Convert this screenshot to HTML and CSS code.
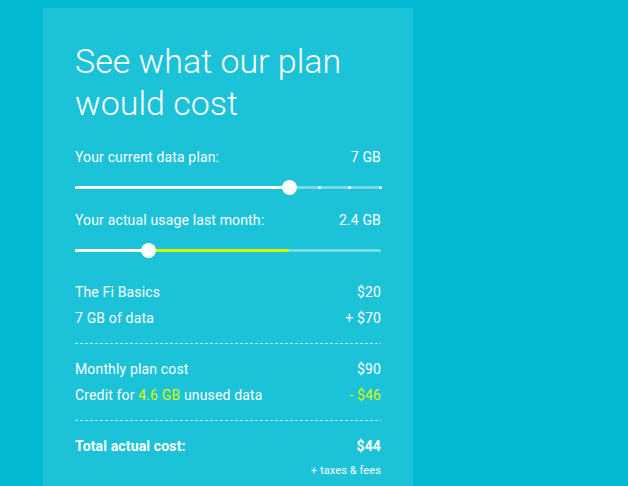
FILE: index.html
```html
<!DOCTYPE html>
<html lang="en">
<head>
    <meta charset="UTF-8">
    <meta name="viewport" content="width=device-width, initial-scale=1.0">
    <title>Plan cost</title>
    <link rel="stylesheet" href="styles.css">
</head>
<body>
    <div class="card">
        <h1>See what our plan would cost</h1>

        <div class="row label-row"><span>Your current data plan:</span><span>7 GB</span></div>
        <div class="slider">
            <div class="track"></div>
            <div class="fill" style="width: 70.3%;"></div>
            <span class="dot" style="left: 80%;"></span>
            <span class="dot" style="left: 89.8%;"></span>
            <span class="dot" style="left: 100%;"></span>
            <div class="thumb" style="left: 70.3%;"></div>
        </div>

        <div class="row label-row second"><span>Your actual usage last month:</span><span>2.4 GB</span></div>
        <div class="slider">
            <div class="track"></div>
            <div class="used" style="width: 69.9%;"></div>
            <div class="fill" style="width: 24.2%;"></div>
            <div class="thumb" style="left: 24.2%;"></div>
        </div>

        <div class="section first">
            <div class="row"><span>The Fi Basics</span><span>$20</span></div>
            <div class="row"><span>7 GB of data</span><span>+ $70</span></div>
        </div>
        <div class="dashes"></div>
        <div class="section">
            <div class="row"><span>Monthly plan cost</span><span>$90</span></div>
            <div class="row"><span>Credit for <em>4.6 GB</em> unused data</span><span class="credit">- $46</span></div>
        </div>
        <div class="dashes"></div>
        <div class="section">
            <div class="row total"><span>Total actual cost:</span><span>$44</span></div>
            <div class="taxes">+ taxes &amp; fees</div>
        </div>
    </div>
</body>
</html>
```

FILE: styles.css
```css
body {
    margin: 0;
    padding: 8px 0 0 43px;
    background-color: #02bbd3;
    font-family: Roboto, "Liberation Sans", sans-serif;
    color: #fff;
    height: 486px;
    box-sizing: border-box;
    overflow: hidden;
}
.card {
    width: 370px;
    min-height: 500px;
    box-sizing: border-box;
    padding: 32px 32px 0 32px;
    background-color: #1cc2d8;
}
h1 {
    margin: 0 0 23px 0;
    font-size: 34px;
    line-height: 42px;
    font-weight: 300;
}
.row {
    display: flex;
    justify-content: space-between;
    font-size: 14px;
    line-height: 26px;
    letter-spacing: 0.15px;
}
.label-row {
    line-height: 20px;
}
.label-row.second {
    margin-top: 13px;
}
.slider {
    position: relative;
    height: 20px;
    margin-top: 10px;
}
.track, .fill, .used {
    position: absolute;
    left: 0;
    top: 9px;
    height: 3px;
    border-radius: 2px;
}
.track {
    width: 100%;
    background-color: rgba(255, 255, 255, 0.4);
}
.fill {
    background-color: #fff;
}
.used {
    background-color: #d6f800;
}
.dot {
    position: absolute;
    top: 9px;
    width: 3px;
    height: 3px;
    margin-left: -2px;
    border-radius: 50%;
    background-color: #fff;
}
.thumb {
    position: absolute;
    top: 3px;
    width: 15px;
    height: 15px;
    margin-left: -8px;
    border-radius: 50%;
    background-color: #fff;
}
.section {
    padding: 12px 0;
}
.section.first {
    margin-top: 19px;
    padding-top: 0;
}
.dashes {
    height: 1px;
    background: repeating-linear-gradient(to right, rgba(255, 255, 255, 0.75) 0 3px, transparent 3px 5px);
}
em {
    font-style: normal;
    color: #d6f800;
}
.credit {
    color: #d6f800;
}
.total {
    font-weight: bold;
}
.taxes {
    margin-top: 4px;
    text-align: right;
    font-size: 11px;
    line-height: 16px;
    letter-spacing: 0.1px;
}
```
